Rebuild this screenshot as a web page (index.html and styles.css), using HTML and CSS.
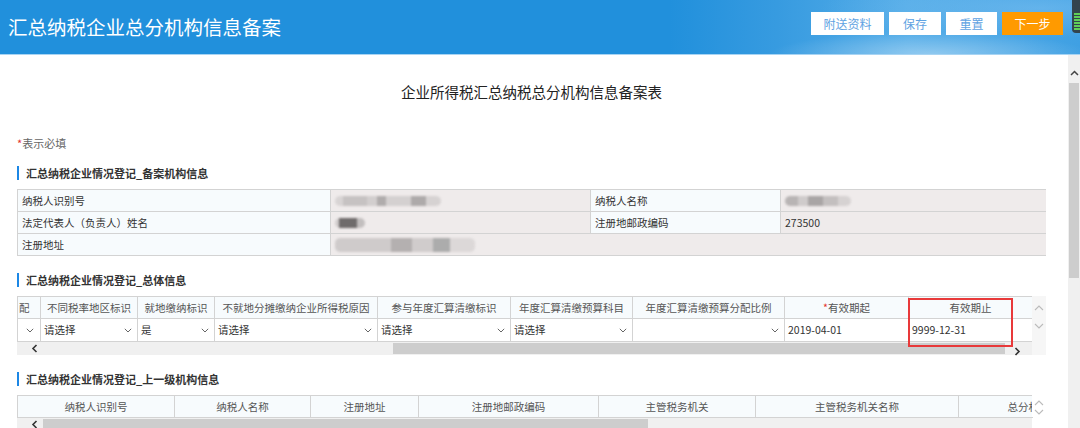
FILE: index.html
```html
<!DOCTYPE html>
<html lang="zh-CN">
<head>
    <meta charset="UTF-8">
    <title>汇总纳税企业总分机构信息备案</title>
    <link rel="stylesheet" href="styles.css">
</head>
<body>
    <div class="topbar">
        <h1 class="topbar-title">汇总纳税企业总分机构信息备案</h1>
        <div class="topbar-actions">
            <button class="btn btn-attach">附送资料</button>
            <button class="btn btn-save">保存</button>
            <button class="btn btn-reset">重置</button>
            <button class="btn btn-next">下一步</button>
        </div>
        <div class="gadget"><i></i><i></i><i></i><i></i><i></i><i></i></div>
    </div>

    <div class="frame">
        <div class="page">
            <h2 class="form-title">企业所得税汇总纳税总分机构信息备案表</h2>
            <p class="note"><span class="req">*</span>表示必填</p>

            <!-- 备案机构信息 -->
            <h3 class="section">汇总纳税企业情况登记_备案机构信息</h3>
            <div class="info-grid">
                <div class="cell label">纳税人识别号</div>
                <div class="cell value"><span class="blur blur-id"></span></div>
                <div class="cell label">纳税人名称</div>
                <div class="cell value"><span class="blur blur-name"></span></div>

                <div class="cell label">法定代表人（负责人）姓名</div>
                <div class="cell value"><span class="blur blur-person"></span></div>
                <div class="cell label">注册地邮政编码</div>
                <div class="cell value">273500</div>

                <div class="cell label">注册地址</div>
                <div class="cell value wide"><span class="blur blur-addr"></span></div>
            </div>

            <!-- 总体信息 -->
            <h3 class="section">汇总纳税企业情况登记_总体信息</h3>
            <div class="grid-wrap">
                <div class="grid-main">
                    <div class="row cols-overall head">
                        <div class="hcell first">配</div>
                        <div class="hcell">不同税率地区标识</div>
                        <div class="hcell">就地缴纳标识</div>
                        <div class="hcell">不就地分摊缴纳企业所得税原因</div>
                        <div class="hcell">参与年度汇算清缴标识</div>
                        <div class="hcell">年度汇算清缴预算科目</div>
                        <div class="hcell">年度汇算清缴预算分配比例</div>
                        <div class="hcell"><span class="req">*</span>有效期起</div>
                        <div class="hcell">有效期止</div>
                    </div>
                    <div class="row cols-overall data">
                        <div class="dcell select end"><span></span><svg class="chev" width="8" height="5" viewBox="0 0 8 5"><path d="M0.8 0.8L4 4 7.2 0.8"/></svg></div>
                        <div class="dcell select"><span>请选择</span><svg class="chev" width="8" height="5" viewBox="0 0 8 5"><path d="M0.8 0.8L4 4 7.2 0.8"/></svg></div>
                        <div class="dcell select"><span>是</span><svg class="chev" width="8" height="5" viewBox="0 0 8 5"><path d="M0.8 0.8L4 4 7.2 0.8"/></svg></div>
                        <div class="dcell select"><span>请选择</span><svg class="chev" width="8" height="5" viewBox="0 0 8 5"><path d="M0.8 0.8L4 4 7.2 0.8"/></svg></div>
                        <div class="dcell select"><span>请选择</span><svg class="chev" width="8" height="5" viewBox="0 0 8 5"><path d="M0.8 0.8L4 4 7.2 0.8"/></svg></div>
                        <div class="dcell select"><span>请选择</span><svg class="chev" width="8" height="5" viewBox="0 0 8 5"><path d="M0.8 0.8L4 4 7.2 0.8"/></svg></div>
                        <div class="dcell select"><span></span><svg class="chev" width="8" height="5" viewBox="0 0 8 5"><path d="M0.8 0.8L4 4 7.2 0.8"/></svg></div>
                        <div class="dcell">2019-04-01</div>
                        <div class="dcell">9999-12-31</div>
                    </div>
                    <div class="hscroll">
                        <svg class="hs-left" width="7" height="9" viewBox="0 0 7 9"><path d="M5.5 1L2 4.5 5.5 8"/></svg>
                        <div class="hs-thumb thumb-overall"></div>
                        <svg class="hs-right" width="7" height="9" viewBox="0 0 7 9"><path d="M1.5 1L5 4.5 1.5 8"/></svg>
                    </div>
                </div>
                <div class="vbar vbar-tall">
                    <svg width="10" height="6" viewBox="0 0 10 6"><path d="M1 5L5 1 9 5"/></svg>
                    <svg width="10" height="6" viewBox="0 0 10 6"><path d="M1 1L5 5 9 1"/></svg>
                </div>
                <div class="highlight"></div>
            </div>

            <!-- 上一级机构信息 -->
            <h3 class="section">汇总纳税企业情况登记_上一级机构信息</h3>
            <div class="grid-wrap">
                <div class="grid-main">
                    <div class="row cols-parent head">
                        <div class="hcell">纳税人识别号</div>
                        <div class="hcell">纳税人名称</div>
                        <div class="hcell">注册地址</div>
                        <div class="hcell">注册地邮政编码</div>
                        <div class="hcell">主管税务机关</div>
                        <div class="hcell">主管税务机关名称</div>
                        <div class="hcell clip"><span>总分机构类型</span></div>
                    </div>
                    <div class="hscroll">
                        <svg class="hs-left" width="7" height="9" viewBox="0 0 7 9"><path d="M5.5 1L2 4.5 5.5 8"/></svg>
                        <div class="hs-thumb thumb-parent"></div>
                    </div>
                </div>
                <div class="vbar vbar-short">
                    <svg width="10" height="6" viewBox="0 0 10 6"><path d="M1 5L5 1 9 5"/></svg>
                    <svg width="10" height="6" viewBox="0 0 10 6"><path d="M1 1L5 5 9 1"/></svg>
                </div>
            </div>
        </div>
        <div class="spacer"></div>
        <div class="vscroll">
            <svg width="9" height="6" viewBox="0 0 9 6"><path d="M1 5L4.5 1.5 8 5"/></svg>
            <div class="vs-thumb"></div>
        </div>
    </div>
</body>
</html>
```

FILE: styles.css
```css
* {
    box-sizing: border-box;
}
body {
    margin: 0;
    width: 1080px;
    height: 428px;
    overflow: hidden;
    background: #fff;
    font-family: "Noto Sans CJK SC", "Noto Sans", "Liberation Sans", sans-serif;
    color: #333;
}

/* top bar */
.topbar {
    position: relative;
    height: 55px;
    padding: 0 17px 0 8px;
    display: flex;
    align-items: center;
    justify-content: space-between;
    border-bottom: 1px solid #a8d4f3;
    background:
        radial-gradient(ellipse 160px 22px at 930px 54px, rgba(255, 255, 255, 0.35), transparent),
        radial-gradient(ellipse 220px 30px at 1040px 8px, rgba(120, 190, 240, 0.6), transparent),
        linear-gradient(90deg, #2190dc 0, #2190dc 62%, #379be0 72%, #55ade8 84%, #3fa0e3 100%);
}
.topbar-title {
    margin: 0 0 2px;
    font-size: 19.5px;
    font-weight: normal;
    color: #fff;
}
.topbar-actions {
    display: flex;
    gap: 5px;
    margin-bottom: 7px;
}
.btn {
    height: 23px;
    padding: 0;
    border: none;
    background: #fff;
    color: #5ea2e2;
    font-family: inherit;
    font-size: 12px;
    cursor: pointer;
}
.btn-attach { width: 73px; }
.btn-save { width: 52px; }
.btn-reset { width: 51px; }
.btn-next {
    width: 61px;
    background: #ff9a00;
    color: #fff;
}
.gadget {
    position: absolute;
    right: -4px;
    top: -4px;
    width: 12px;
    height: 37px;
    padding: 17px 2px 0 2px;
    border-radius: 4px;
    background: #33444e;
    display: flex;
    flex-direction: column;
    gap: 1px;
}
.gadget i {
    display: block;
    height: 2px;
    background: #5fcf57;
}

/* content frame */
.frame {
    display: flex;
    height: 373px;
}
.page {
    width: 1046px;
    padding-left: 17px;
    overflow: hidden;
}
.spacer {
    flex: 1;
}
.vscroll {
    width: 12px;
    background: #f0f0f0;
    display: flex;
    flex-direction: column;
    align-items: center;
    padding-top: 15px;
}
.vscroll svg path {
    fill: none;
    stroke: #444;
    stroke-width: 1.5;
}
.vs-thumb {
    width: 10px;
    height: 195px;
    margin-top: 7px;
    background: #cdcdcd;
}

.form-title {
    margin: 27px 0 0;
    width: 1029px;
    text-align: center;
    font-size: 14.5px;
    line-height: 20px;
    font-weight: normal;
    color: #222;
}
.note {
    margin: 33px 0 0;
    font-size: 11px;
    line-height: 16px;
    color: #666;
}
.req {
    color: #e3322f;
}
.section {
    margin: 15px 0 0;
    padding-left: 7px;
    border-left: 2px solid #1c87e5;
    font-size: 11px;
    line-height: 14px;
    font-weight: bold;
    color: #333;
}
.info-grid + .section,
.grid-wrap + .section {
    margin-top: 17px;
}

/* info table */
.info-grid {
    margin-top: 9px;
    width: 1029px;
    display: grid;
    grid-template-columns: 313px 260px 190px 266px;
    grid-auto-rows: 22px;
    border-top: 1px solid #d3d3d3;
    border-left: 1px solid #d3d3d3;
    font-size: 10.5px;
}
.cell {
    border-right: 1px solid #d3d3d3;
    border-bottom: 1px solid #d3d3d3;
    padding-left: 4px;
    line-height: 21px;
    white-space: nowrap;
    display: flex;
    align-items: center;
}
.label {
    background: #f7fbfd;
    color: #333;
}
.value {
    background: #efebeb;
    color: #333;
}
.wide {
    grid-column: span 3;
}
.blur {
    display: inline-block;
    height: 10px;
    border-radius: 5px;
    filter: blur(1.2px);
}
.blur-id {
    width: 106px;
    background: linear-gradient(90deg, #d8d4d4 0 8%, #c6c2c2 8% 30%, #d2cece 30% 40%, #b0acac 40% 48%, #d4d0d0 48% 72%, #aeaaaa 72% 86%, #d6d2d2 86%);
}
.blur-name {
    width: 66px;
    background: linear-gradient(90deg, #b8b4b4 0 20%, #cfcbcb 20% 35%, #a9a5a5 35% 58%, #c3bfbf 58% 80%, #d6d2d2 80%);
}
.blur-person {
    width: 30px;
    background: linear-gradient(90deg, #d0cccc 0 12%, #6f6b6b 12% 72%, #c2bebe 72%);
}
.blur-addr {
    width: 140px;
    height: 14px;
    background: linear-gradient(90deg, #cfcbcb 0 40%, #b4b0b0 40% 55%, #d0cccc 55% 70%, #acacac 70% 82%, #dcd8d8 82%);
}

/* scrolling grids */
.grid-wrap {
    position: relative;
    margin-top: 9px;
    width: 1029px;
    display: flex;
}
.grid-main {
    width: 1015px;
}
.row {
    display: grid;
    font-size: 10.5px;
    border-left: 1px solid #d3d3d3;
}
.cols-overall {
    grid-template-columns: 23px 97px 77px 163px 133px 122px 152px 124px 124px;
}
.cols-parent {
    grid-template-columns: 157px 136px 108px 180px 157px 203px 74px;
}
.head {
    border-top: 1px solid #d3d3d3;
    background: #f7fbfd;
}
.hcell {
    height: 22px;
    line-height: 21px;
    border-right: 1px solid #d3d3d3;
    border-bottom: 1px solid #d3d3d3;
    text-align: center;
    color: #555;
    white-space: nowrap;
}
.hcell.first {
    text-align: left;
    padding-left: 1px;
}
.hcell.clip {
    overflow: hidden;
    border-right: none;
}
.hcell.clip span {
    display: block;
    width: 160px;
    text-align: center;
}
.data {
    background: #fff;
}
.dcell {
    height: 23px;
    line-height: 22px;
    border-right: 1px solid #d3d3d3;
    border-bottom: 1px solid #d3d3d3;
    padding-left: 3px;
    color: #333;
    white-space: nowrap;
}
.select {
    display: flex;
    align-items: center;
    justify-content: space-between;
    padding-right: 5px;
}
.select.end {
    padding-right: 6px;
}
.chev path {
    fill: none;
    stroke: #666;
    stroke-width: 1;
}

.hscroll {
    height: 13px;
    background: #f0f0f0;
    display: flex;
    align-items: center;
}
.hscroll svg path {
    fill: none;
    stroke: #333;
    stroke-width: 1.6;
}
.hs-left {
    margin-left: 14px;
}
.hs-thumb {
    height: 11px;
    background: #cdcdcd;
}
.thumb-overall {
    width: 612px;
    margin-left: 355px;
}
.hs-right {
    margin-left: 9px;
    margin-top: 6px;
}
.thumb-parent {
    width: 605px;
    margin-left: 5px;
}

.vbar {
    width: 14px;
    background: #f6f6f6;
    display: flex;
    flex-direction: column;
    align-items: center;
}
.vbar svg path {
    fill: none;
    stroke: #bbb;
    stroke-width: 1.1;
}
.vbar-tall {
    padding-top: 9px;
    gap: 12px;
}
.vbar-short {
    padding-top: 5px;
    gap: 3px;
    height: 22px;
    background: #fff;
}

.highlight {
    position: absolute;
    left: 891px;
    top: 2px;
    width: 105px;
    height: 49px;
    border: 2px solid #e8393a;
}
```
